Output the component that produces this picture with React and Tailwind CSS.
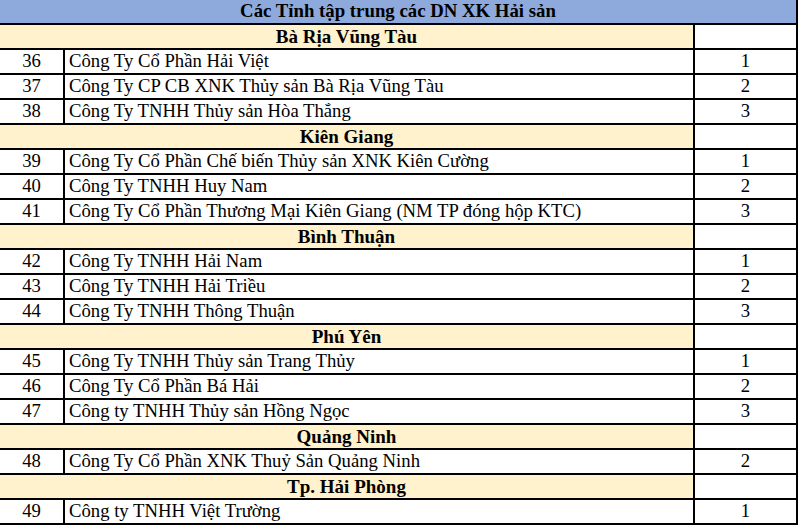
const groups = [
  {
    name: 'Bà Rịa Vũng Tàu',
    rows: [
      [36, 'Công Ty Cổ Phần Hải Việt', 1],
      [37, 'Công Ty CP CB XNK Thủy sản Bà Rịa Vũng Tàu', 2],
      [38, 'Công Ty TNHH Thủy sản Hòa Thắng', 3],
    ],
  },
  {
    name: 'Kiên Giang',
    rows: [
      [39, 'Công Ty Cổ Phần Chế biến Thủy sản XNK Kiên Cường', 1],
      [40, 'Công Ty TNHH Huy Nam', 2],
      [41, 'Công Ty Cổ Phần Thương Mại Kiên Giang (NM TP đóng hộp KTC)', 3],
    ],
  },
  {
    name: 'Bình Thuận',
    rows: [
      [42, 'Công Ty TNHH Hải Nam', 1],
      [43, 'Công Ty TNHH Hải Triều', 2],
      [44, 'Công Ty TNHH Thông Thuận', 3],
    ],
  },
  {
    name: 'Phú Yên',
    rows: [
      [45, 'Công Ty TNHH Thủy sản Trang Thủy', 1],
      [46, 'Công Ty Cổ Phần Bá Hải', 2],
      [47, 'Công ty TNHH Thủy sản Hồng Ngọc', 3],
    ],
  },
  {
    name: 'Quảng Ninh',
    rows: [[48, 'Công Ty Cổ Phần XNK Thuỷ Sản Quảng Ninh', 2]],
  },
  {
    name: 'Tp. Hải Phòng',
    rows: [[49, 'Công ty TNHH Việt Trường', 1]],
  },
];

function SectionRow({ name }) {
  return (
    <div className="flex h-[25px] border-b-2 border-black">
      <div className="w-[695px] bg-[#fff2cc] border-r-2 border-black flex items-center justify-center font-bold text-[19px]">
        {name}
      </div>
      <div className="w-[103px] border-r-2 border-black bg-white" />
    </div>
  );
}

function DataRow({ no, name, rank }) {
  return (
    <div className="flex h-[25px] border-b-2 border-black bg-white">
      <div className="w-[65px] border-r-2 border-black flex items-center justify-center">{no}</div>
      <div className="w-[630px] border-r-2 border-black flex items-center pl-[4px] whitespace-nowrap">{name}</div>
      <div className="w-[103px] border-r-2 border-black flex items-center justify-center">{rank}</div>
    </div>
  );
}

export default function App() {
  return (
    <div className="w-[801px] h-[527px] bg-white text-black text-[18.7px] leading-none" style={{ fontFamily: '"Liberation Serif", "Times New Roman", serif' }}>
      <div className="w-[798px]">
        <div className="h-[25px] bg-[#8ea9db] border-b-2 border-r-2 border-black flex items-center justify-center font-bold text-[18.8px]">
          Các Tỉnh tập trung các DN XK Hải sản
        </div>
        {groups.map((g) => (
          <div key={g.name}>
            <SectionRow name={g.name} />
            {g.rows.map(([no, name, rank]) => (
              <DataRow key={no} no={no} name={name} rank={rank} />
            ))}
          </div>
        ))}
      </div>
    </div>
  );
}
